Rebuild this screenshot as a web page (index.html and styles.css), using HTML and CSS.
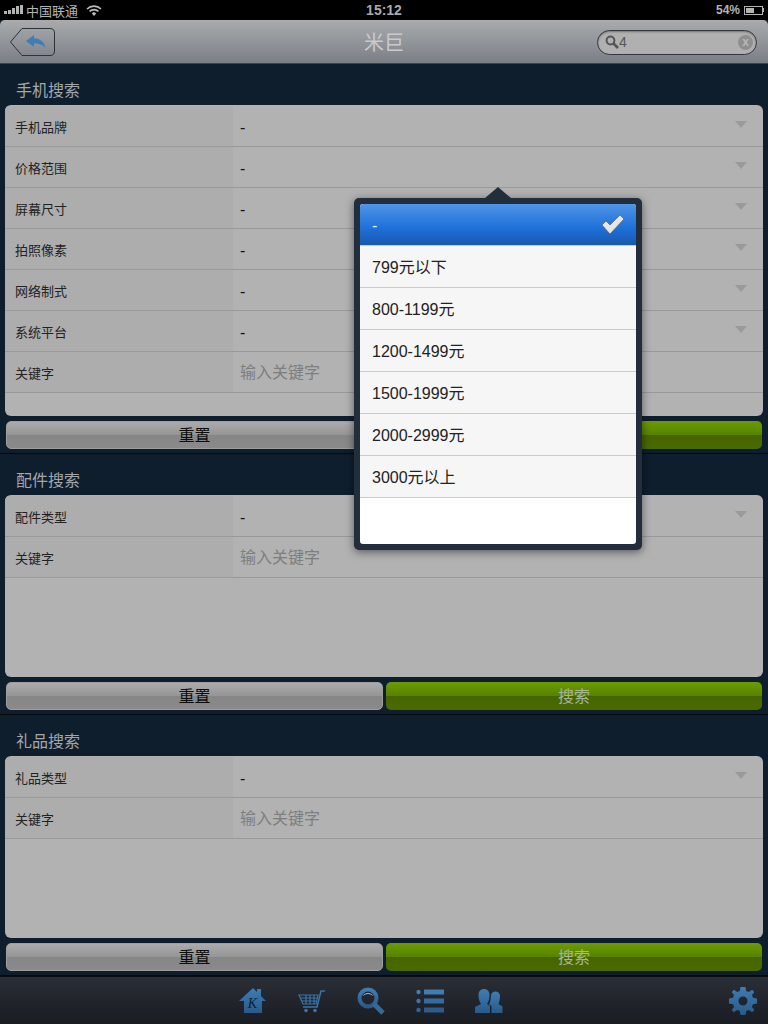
FILE: index.html
```html
<!DOCTYPE html>
<html lang="zh-CN">
<head>
  <meta charset="UTF-8" />
  <title>米巨</title>
  <link rel="stylesheet" href="styles.css">
</head>
<body>
  <div class="status-bar">
    <div class="status-left">
      <svg class="signal" width="20" height="10" viewBox="0 0 20 10"><rect x="0" y="6" width="3" height="3"/><rect x="4" y="5" width="3" height="4"/><rect x="8" y="3" width="3" height="6"/><rect x="12" y="1" width="3" height="8"/><rect x="16" y="0" width="3" height="9"/></svg>
      <span>中国联通</span>
      <svg class="wifi" width="16" height="11" viewBox="0 0 16 11"><path d="M1 4 A10 10 0 0 1 15 4" fill="none" stroke="#bbb" stroke-width="1.6"/><path d="M3.6 6.4 A6.4 6.4 0 0 1 12.4 6.4" fill="none" stroke="#bbb" stroke-width="1.6"/><path d="M8 11 L5.8 8.4 A3 3 0 0 1 10.2 8.4 Z" fill="#bbb"/></svg>
    </div>
    <div class="status-time">15:12</div>
    <div class="status-right">
      <span>54%</span>
      <div class="battery"><div class="battery-fill"></div></div>
      <div class="battery-tip"></div>
    </div>
  </div>

  <header class="top-bar">
    <div class="back-btn">
      <svg class="back-shape" width="45" height="28" viewBox="0 0 45 28"><path d="M0.5 14 L12 0.5 H40 Q44.5 0.5 44.5 5 V23 Q44.5 27.5 40 27.5 H12 Z" fill="none" stroke="#2c3238" stroke-width="1"/></svg>
      <svg class="back-arrow" width="20" height="14" viewBox="0 0 20 14"><path d="M0 6 L8 0 V3.5 C14 3.5 18 6 19.5 13 C16.5 9.5 13 8.5 8 8.5 V12 Z" fill="#3f7db5"/></svg>
    </div>
    <h1 class="top-title">米巨</h1>
    <div class="search-box">
      <svg width="14" height="14" viewBox="0 0 14 14"><circle cx="5.5" cy="5.5" r="3.9" fill="none" stroke="#555" stroke-width="2"/><path d="M8.5 8.5 L13 13" stroke="#555" stroke-width="2.6"/></svg>
      <span class="search-text">4</span>
      <span class="search-clear">x</span>
    </div>
  </header>

  <main>
    <section class="panel">
      <h2 class="panel-title">手机搜索</h2>
      <div class="card card-large">
        <div class="row"><label>手机品牌</label><div class="value">-<i class="caret"></i></div></div>
        <div class="row"><label>价格范围</label><div class="value">-<i class="caret"></i></div></div>
        <div class="row"><label>屏幕尺寸</label><div class="value">-<i class="caret"></i></div></div>
        <div class="row"><label>拍照像素</label><div class="value">-<i class="caret"></i></div></div>
        <div class="row"><label>网络制式</label><div class="value">-<i class="caret"></i></div></div>
        <div class="row"><label>系统平台</label><div class="value">-<i class="caret"></i></div></div>
        <div class="row"><label>关键字</label><div class="value placeholder">输入关键字</div></div>
      </div>
      <div class="btn-row"><div class="btn btn-reset">重置</div><div class="btn btn-search">搜索</div></div>
    </section>

    <section class="panel">
      <h2 class="panel-title">配件搜索</h2>
      <div class="card">
        <div class="row"><label>配件类型</label><div class="value">-<i class="caret"></i></div></div>
        <div class="row"><label>关键字</label><div class="value placeholder">输入关键字</div></div>
      </div>
      <div class="btn-row"><div class="btn btn-reset">重置</div><div class="btn btn-search">搜索</div></div>
    </section>

    <section class="panel">
      <h2 class="panel-title">礼品搜索</h2>
      <div class="card">
        <div class="row"><label>礼品类型</label><div class="value">-<i class="caret"></i></div></div>
        <div class="row"><label>关键字</label><div class="value placeholder">输入关键字</div></div>
      </div>
      <div class="btn-row"><div class="btn btn-reset">重置</div><div class="btn btn-search">搜索</div></div>
    </section>
  </main>

  <footer class="tab-bar">
    <div class="tabs">
      <svg width="28" height="26" viewBox="0 0 28 26"><defs><linearGradient id="blue" x1="0" y1="0" x2="0" y2="1"><stop offset="0" stop-color="#3f7db3"/><stop offset="1" stop-color="#285a8a"/></linearGradient></defs><path d="M0 13 L14 0 L18 4 V1 H22 V8 L27 13 H23 V25 H5 V13 Z" fill="url(#blue)"/><text class="home-k" x="13.5" y="20">K</text></svg>
      <svg width="28" height="24" viewBox="0 0 28 24"><path d="M1 6 H20 L18 15 H5 Z" fill="none" stroke="#3a74a9" stroke-width="1.2"/><path d="M3 9 H19 M4 12 H18 M8 6 V15 M12 6 V15 M16 6 V15" stroke="#3a74a9" stroke-width="1.2"/><path d="M5 18 H19 L23 2 H27" fill="none" stroke="#3a74a9" stroke-width="1.5"/><circle cx="8" cy="21.5" r="1.8" fill="#3a74a9"/><circle cx="17" cy="21.5" r="1.8" fill="#3a74a9"/></svg>
      <svg width="28" height="28" viewBox="0 0 28 28"><circle cx="11" cy="11" r="8.5" fill="none" stroke="url(#blue)" stroke-width="4"/><path d="M5.5 9 A6.5 6.5 0 0 1 16.5 9 A9 9 0 0 0 5.5 9 Z" fill="#9bb8d0"/><path d="M17 17 L26 26" stroke="#34699c" stroke-width="5"/></svg>
      <svg width="28" height="24" viewBox="0 0 28 24"><circle cx="2.5" cy="3" r="2.2" fill="#3f7db3"/><circle cx="2.5" cy="12" r="2.2" fill="#3a74a9"/><circle cx="2.5" cy="21" r="2.2" fill="#2f6496"/><rect x="8" y="0.5" width="20" height="5" fill="#3f7db3"/><rect x="8" y="9.5" width="20" height="5" fill="#356c9f"/><rect x="8" y="18.5" width="20" height="5" fill="#2a5d8e"/></svg>
      <svg width="28" height="24" viewBox="0 0 28 24"><path d="M0 24 V18 L6 15 C4 12 3.5 9 3.5 6 C3.5 2 6 0 9 0 C12 0 14.5 2 14.5 6 C14.5 9 14 12 12 15 L15 17 V24 Z" fill="url(#blue)"/><path d="M16.5 24 V17 L14 15.5 C15.5 13 16 9 16 7 C16 4 18 2.5 20.5 2.5 C23 2.5 25 4 25 7 C25 9.5 24.5 12.5 23.5 15 L27.5 17.5 V24 Z" fill="url(#blue)"/></svg>
    </div>
    <svg class="gear" width="28" height="28" viewBox="0 0 28 28"><path d="M11.5 0 H16.5 L17.2 4 L19.8 5.1 L23.1 2.7 L25.3 4.9 L22.9 8.2 L24 10.8 L28 11.5 V16.5 L24 17.2 L22.9 19.8 L25.3 23.1 L23.1 25.3 L19.8 22.9 L17.2 24 L16.5 28 H11.5 L10.8 24 L8.2 22.9 L4.9 25.3 L2.7 23.1 L5.1 19.8 L4 17.2 L0 16.5 V11.5 L4 10.8 L5.1 8.2 L2.7 4.9 L4.9 2.7 L8.2 5.1 L10.8 4 Z M14 9.5 A4.5 4.5 0 1 0 14 18.5 A4.5 4.5 0 1 0 14 9.5 Z" fill="url(#blue)" fill-rule="evenodd"/></svg>
  </footer>

  <div class="popover">
    <div class="popover-arrow"></div>
    <div class="popover-inner">
      <div class="option option-selected">-
        <svg class="check" width="24" height="21" viewBox="0 0 24 21"><path d="M1 11 L5 7 L9 11 L19 1 L23 5 L9 20 Z" fill="#e6e6e6" stroke="#5b6b7d" stroke-width="0.8"/></svg>
      </div>
      <div class="option">799元以下</div>
      <div class="option">800-1199元</div>
      <div class="option">1200-1499元</div>
      <div class="option">1500-1999元</div>
      <div class="option">2000-2999元</div>
      <div class="option">3000元以上</div>
    </div>
  </div>
</body>
</html>
```

FILE: styles.css
```css
* {
  margin: 0;
  padding: 0;
  box-sizing: border-box;
}

body {
  width: 768px;
  height: 1024px;
  overflow: hidden;
  position: relative;
  background: #0f1e2d;
  font-family: "Liberation Sans", "Noto Sans CJK SC", sans-serif;
}

.status-bar {
  height: 20px;
  background: #000;
  color: #b4b4b4;
  font-size: 13px;
  display: flex;
  align-items: center;
  justify-content: space-between;
  position: relative;
}

.status-left {
  display: flex;
  align-items: center;
  padding-left: 4px;
  gap: 2px;
}

.signal {
  fill: #b4b4b4;
}

.wifi {
  margin-left: 6px;
}

.status-time {
  position: absolute;
  left: 0;
  right: 0;
  text-align: center;
  font-weight: bold;
  font-size: 14px;
  color: #aaa;
}

.status-right {
  display: flex;
  align-items: center;
  padding-right: 4px;
  font-weight: bold;
  font-size: 12px;
}

.battery {
  width: 19px;
  height: 9px;
  border: 1px solid #b4b4b4;
  margin-left: 4px;
  padding: 1px;
}

.battery-fill {
  width: 54%;
  height: 100%;
  background: #b4b4b4;
}

.battery-tip {
  width: 1px;
  height: 4px;
  background: #b4b4b4;
}

.top-bar {
  height: 44px;
  background: linear-gradient(to bottom, #a9abad, #7b7f86);
  border-bottom: 1px solid #35465a;
  border-radius: 5px 5px 0 0;
  position: relative;
  display: flex;
  align-items: center;
  justify-content: space-between;
  padding: 0 11px 0 10px;
}

.back-btn {
  width: 45px;
  height: 28px;
  position: relative;
  display: flex;
  align-items: center;
  justify-content: center;
}

.back-shape {
  position: absolute;
  left: 0;
  top: 0;
}

.back-arrow {
  position: relative;
  left: 3px;
}

.top-title {
  position: absolute;
  left: 0;
  right: 0;
  text-align: center;
  font-size: 20px;
  font-weight: normal;
  color: #c9cacc;
}

.search-box {
  width: 160px;
  height: 25px;
  border: 1px solid #33383e;
  border-radius: 13px;
  background: #b0b0b0;
  box-shadow: inset 0 1px 2px rgba(0, 0, 0, 0.35);
  display: flex;
  align-items: center;
  padding: 0 3px 0 7px;
  position: relative;
  z-index: 1;
  margin-top: 1px;
}

.search-text {
  flex: 1;
  font-size: 14px;
  color: #555;
}

.search-clear {
  width: 15px;
  height: 15px;
  border-radius: 50%;
  background: #8f8f8f;
  color: #b8b8b8;
  font-size: 12px;
  font-weight: bold;
  line-height: 14px;
  text-align: center;
}

.panel {
  padding: 0 5px 4px;
  border-bottom: 1px solid #05090d;
}

.panel-title {
  height: 41px;
  padding: 16px 0 0 11px;
  font-size: 16px;
  line-height: 21px;
  font-weight: normal;
  color: #a3a7ab;
}

.card {
  height: 182px;
  padding-top: 1px;
  background: #b2b2b2;
  border-radius: 6px;
  overflow: hidden;
}

.card-large {
  height: 311px;
}

.row {
  height: 41px;
  display: flex;
  border-bottom: 1px solid #999;
}

.row label {
  width: 228px;
  background: #adadad;
  padding-left: 10px;
  font-size: 13px;
  line-height: 44px;
  color: #222;
}

.value {
  flex: 1;
  position: relative;
  padding-left: 7px;
  font-size: 16px;
  line-height: 43px;
  color: #111;
}

.placeholder {
  color: #7e7e7e;
  line-height: 41px;
}

.caret {
  position: absolute;
  right: 16px;
  top: 15px;
  border-left: 6px solid transparent;
  border-right: 6px solid transparent;
  border-top: 7px solid #9a9a9a;
}

.btn-row {
  display: grid;
  grid-template-columns: 377px 376px;
  gap: 3px;
  padding: 5px 1px 0;
}

.btn {
  height: 28px;
  border-radius: 5px;
  font-size: 16px;
  line-height: 30px;
  text-align: center;
}

.btn-reset {
  background: linear-gradient(to bottom, #ababab, #959595 50%, #868686 50%, #8a8a8a);
  border: 1px solid #9e9e9e;
  line-height: 28px;
  color: #0c0c0c;
}

.btn-search {
  background: linear-gradient(to bottom, #6c9b00, #578300 50%, #466500 50%, #4a6a00);
  color: #a9b59a;
}

.tab-bar {
  height: 48px;
  background: linear-gradient(to bottom, #2a2e36, #191c21);
  border-top: 1px solid #0a0d10;
  position: relative;
  display: flex;
  justify-content: center;
  align-items: center;
}

.tabs {
  display: flex;
  align-items: center;
  gap: 31px;
  position: relative;
  left: -13px;
}

.home-k {
  font-family: "Liberation Serif", serif;
  font-style: italic;
  font-size: 14px;
  text-anchor: middle;
  fill: #12202e;
}

.gear {
  position: absolute;
  right: 11px;
  top: 10px;
}

.popover {
  position: absolute;
  left: 354px;
  top: 198px;
  width: 288px;
  height: 352px;
  padding: 6px;
  background: #232e3c;
  border-radius: 5px;
  box-shadow: 0 2px 8px rgba(0, 0, 0, 0.5);
}

.popover-arrow {
  position: absolute;
  left: 131px;
  top: -11px;
  border-left: 13px solid transparent;
  border-right: 13px solid transparent;
  border-bottom: 11px solid #232e3c;
}

.popover-inner {
  height: 340px;
  background: #fff;
  border-radius: 3px;
  overflow: hidden;
}

.option {
  height: 42px;
  padding-left: 12px;
  background: #f6f6f6;
  border-bottom: 1px solid #cbcbcb;
  font-size: 16px;
  line-height: 43px;
  color: #222;
}

.option-selected {
  position: relative;
  background: linear-gradient(to bottom, #5095e8, #1e6fd8 60%, #1a58ac);
  color: #e8eef8;
}

.check {
  position: absolute;
  right: 11px;
  top: 10px;
}
```
